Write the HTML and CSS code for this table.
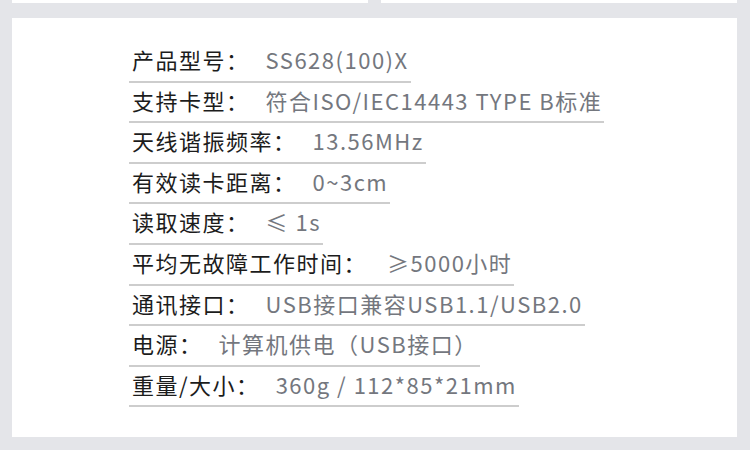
FILE: index.html
```html
<!DOCTYPE html>
<html lang="zh-CN">

<head>
    <meta charset="UTF-8">
    <meta name="viewport" content="width=device-width, initial-scale=1.0">
    <title>产品参数</title>
    <link rel="stylesheet" href="styles.css">
</head>

<body>
    <!-- strips of the panels above -->
    <div class="top-strips">
        <div class="strip"></div>
        <div class="strip"></div>
    </div>

    <div class="card">
        <ul class="specs">
            <li><span class="item"><span class="label">产品型号：</span><span class="value">SS628(100)X</span></span></li>
            <li><span class="item"><span class="label">支持卡型：</span><span class="value">符合ISO/IEC14443 TYPE B标准</span></span></li>
            <li><span class="item"><span class="label">天线谐振频率：</span><span class="value">13.56MHz</span></span></li>
            <li><span class="item"><span class="label">有效读卡距离：</span><span class="value">0~3cm</span></span></li>
            <li><span class="item"><span class="label">读取速度：</span><span class="value">≤ 1s</span></span></li>
            <li><span class="item"><span class="label">平均无故障工作时间：</span><span class="value wide">≥5000小时</span></span></li>
            <li><span class="item"><span class="label">通讯接口：</span><span class="value">USB接口兼容USB1.1/USB2.0</span></span></li>
            <li><span class="item"><span class="label">电源：</span><span class="value">计算机供电（USB接口）</span></span></li>
            <li><span class="item"><span class="label">重量/大小：</span><span class="value">360g / 112*85*21mm</span></span></li>
        </ul>
    </div>
</body>

</html>
```

FILE: styles.css
```css
* {
    margin: 0;
    padding: 0;
    box-sizing: border-box;
    font-family: 'Noto Sans CJK SC', 'Noto Sans', sans-serif;
}

body {
    background-color: #e4e5e9;
    width: 750px;
    height: 450px;
    overflow: hidden;
}

.top-strips {
    display: flex;
    gap: 13px;
    padding: 0 13px 0 12px;
}

.strip {
    flex: 1;
    height: 3px;
    background-color: #fff;
}

.card {
    background-color: #fff;
    margin: 15px 13px 0 12px;
    height: 419px;
    padding: 24px 0 0 117px;
}

.specs {
    list-style: none;
}

.specs li {
    display: flex;
    height: 40.6px;
}

.item {
    display: inline-block;
    padding: 0 2px 3px 3px;
    border-bottom: 2px solid #cdcdcd;
    font-size: 22px;
    letter-spacing: 1.5px;
    line-height: 35.6px;
    white-space: nowrap;
}

.label {
    color: #1c1c1c;
}

.value {
    color: #74777e;
    margin-left: 16px;
}

.value.wide {
    margin-left: 20px;
}
```
